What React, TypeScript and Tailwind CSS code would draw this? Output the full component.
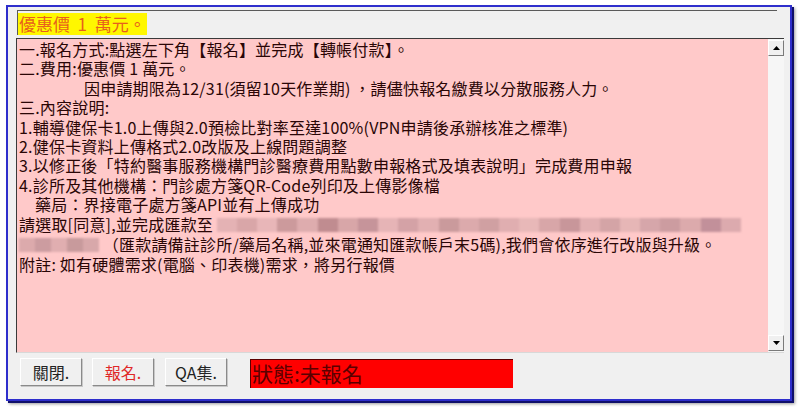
import React from "react";

const blurA = [
  "#e4b2b4", "#d9a6a8", "#e8b6b8", "#cc9a9c", "#deacae", "#c08c90", "#d8a6a8",
  "#c6949a", "#e6b4b6", "#d4a2a6", "#e2b0b2", "#ca9a9c", "#dcaaac", "#d0a0a2",
  "#e0aeb0", "#e8b8b8", "#d8a6a8", "#c8969a", "#e2b0b2", "#d4a4a6", "#e6b6b6",
  "#d6a6aa", "#cc9ca0", "#dcaaac", "#c2909a", "#dcaaae",
];
const blurB = ["#dcaaac", "#cc9ca0", "#e0aeb0", "#c89a9c", "#d8a8aa"];

const Blur = ({ colors, w }: { colors: string[]; w: number }) => (
  <span className="inline-flex h-[14px] align-middle blur-[1px] mb-[3px]" style={{ width: w }}>
    {colors.map((c, i) => (
      <span key={i} className="flex-1 h-full" style={{ backgroundColor: c }} />
    ))}
  </span>
);

const Arrow = ({ up }: { up?: boolean }) => (
  <div className="w-[16px] h-[16px] bg-[#f0f0f0] border border-t-white border-l-white border-r-[#7a7a7a] border-b-[#7a7a7a] flex items-center justify-center">
    <svg width="7" height="4" viewBox="0 0 7 4">
      {up ? <polygon points="0,4 7,4 3.5,0" fill="#000" /> : <polygon points="0,0 7,0 3.5,4" fill="#000" />}
    </svg>
  </div>
);

const Btn = ({ label, red }: { label: string; red?: boolean }) => (
  <button
    className={
      "w-[62px] h-[28px] bg-[#f0f0f0] border border-t-white border-l-white border-r-[#8a8a8a] border-b-[#8a8a8a] shadow-[1px_1px_0_#c8c8c8] text-[16px] " +
      (red ? "text-[#e02828]" : "text-[#222]")
    }
  >
    {label}
  </button>
);

export default function App() {
  const font = "font-['Noto_Sans_CJK_TC','Noto_Sans_CJK_SC',sans-serif]";
  return (
    <div className={"w-[800px] h-[407px] bg-white pt-[5px] pl-[6px] overflow-hidden " + font}>
      <div className="w-[786px] h-[396px] border-2 border-[#2e2ecc] bg-[#f0f0f0] shadow-[2px_2px_0_#10106a,3px_3px_3px_#999] flex flex-col">
        <div className="ml-[9px] mt-[3px] w-[760px] h-[25px] border-t border-l border-[#5a5a5a] pt-[1px]">
          <span className="inline-block h-[22px] bg-[#fff700] px-[1px] text-[17px] leading-[22px] text-[#e8601c] whitespace-pre">
            優惠價  1  萬元。
          </span>
        </div>

        <div className="ml-[8px] mt-[3px] w-[768px] h-[315px] border-t border-l border-[#3a3a3a] border-b border-b-[#d8d8d8] flex">
          <div className="flex-1 bg-[#ffc9c9] pl-[2px] pt-[1px] text-[16px] leading-[19.4px] text-[#2a0606] whitespace-pre tracking-[0.2px]">
            <div>一.報名方式:點選左下角【報名】並完成【轉帳付款】。</div>
            <div>二.費用:優惠價 1 萬元。</div>
            <div className="pl-[65px]">因申請期限為12/31(須留10天作業期) ，請儘快報名繳費以分散服務人力。</div>
            <div>三.內容說明:</div>
            <div>1.輔導健保卡1.0上傳與2.0預檢比對率至達100%(VPN申請後承辦核准之標準)</div>
            <div>2.健保卡資料上傳格式2.0改版及上線問題調整</div>
            <div>3.以修正後「特約醫事服務機構門診醫療費用點數申報格式及填表說明」完成費用申報</div>
            <div>4.診所及其他機構：門診處方箋QR-Code列印及上傳影像檔</div>
            <div className="pl-[16px]">藥局：界接電子處方箋API並有上傳成功</div>
            <div>
              請選取[同意],並完成匯款至 <Blur colors={blurA} w={524} />
            </div>
            <div>
              <Blur colors={blurB} w={80} /> （匯款請備註診所/藥局名稱,並來電通知匯款帳戶末5碼),我們會依序進行改版與升級。
            </div>
            <div>附註: 如有硬體需求(電腦、印表機)需求，將另行報價</div>
          </div>
          <div className="w-[16px] bg-[#f6f6f6] flex flex-col justify-between pt-[1px] pb-[1px]">
            <Arrow up />
            <Arrow />
          </div>
        </div>

        <div className="mt-[5px] ml-[12px] flex items-start">
          <Btn label="關閉." />
          <div className="ml-[10px]">
            <Btn label="報名." red />
          </div>
          <div className="ml-[11px]">
            <Btn label="QA集." />
          </div>
          <div className="ml-[23px] mt-[1px] w-[263px] h-[29px] bg-[#ff0000] border-t border-l border-[#5a0000] text-[21px] leading-[27px] text-[#5a0000] pl-[1px]">
            狀態:未報名
          </div>
        </div>
      </div>
    </div>
  );
}
